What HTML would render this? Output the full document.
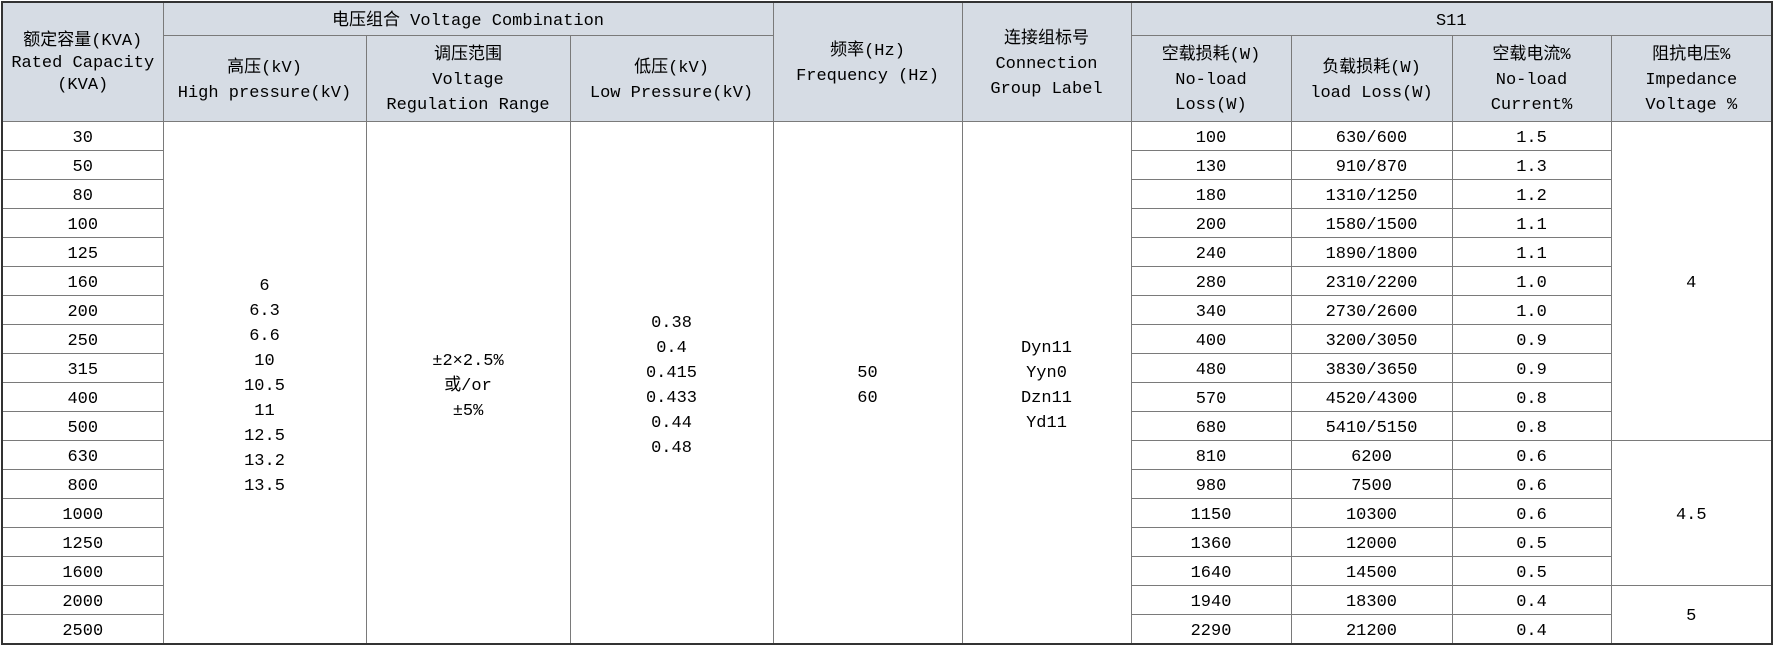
<!DOCTYPE html>
<html><head><meta charset="utf-8"><style>
html,body{margin:0;padding:0;background:#fff;width:1773px;height:647px;overflow:hidden}
table{position:absolute;left:1px;top:1px;border-collapse:collapse;table-layout:fixed;font-family:"Liberation Mono","Noto Sans CJK SC",monospace;font-size:17px;color:#000;border:2px solid #333}
td{border:1px solid #7a7a7a;text-align:center;vertical-align:middle;padding:5px 0 0 0;line-height:25px;overflow:hidden;white-space:nowrap;box-sizing:border-box}
.h td{background:#d6dce4}
tr.r td{height:29px;line-height:22px;padding-top:6px}
td.m{line-height:25px!important;padding-top:8px!important}
</style></head><body>
<table>
<colgroup><col style="width:161px"><col style="width:203px"><col style="width:204px"><col style="width:203px"><col style="width:189px"><col style="width:169px"><col style="width:160px"><col style="width:161px"><col style="width:159px"><col style="width:161px"></colgroup>
<tr class="h" style="height:33px"><td rowspan="2" style="line-height:22px">额定容量(KVA)<br>Rated Capacity<br>(KVA)</td><td colspan="3">电压组合 Voltage Combination</td><td rowspan="2">频率(Hz)<br>Frequency (Hz)</td><td rowspan="2">连接组标号<br>Connection<br>Group Label</td><td colspan="4">S11</td></tr>
<tr class="h" style="height:86px"><td>高压(kV)<br>High pressure(kV)</td><td>调压范围<br>Voltage<br>Regulation Range</td><td>低压(kV)<br>Low Pressure(kV)</td><td>空载损耗(W)<br>No-load<br>Loss(W)</td><td>负载损耗(W)<br>load Loss(W)</td><td>空载电流%<br>No-load<br>Current%</td><td>阻抗电压%<br>Impedance<br>Voltage %</td></tr>
<tr class="r"><td>30</td><td rowspan="18" class="m">6<br>6.3<br>6.6<br>10<br>10.5<br>11<br>12.5<br>13.2<br>13.5</td><td rowspan="18" class="m">±2×2.5%<br>或/or<br>±5%</td><td rowspan="18" class="m">0.38<br>0.4<br>0.415<br>0.433<br>0.44<br>0.48</td><td rowspan="18" class="m">50<br>60</td><td rowspan="18" class="m">Dyn11<br>Yyn0<br>Dzn11<br>Yd11</td><td>100</td><td>630/600</td><td>1.5</td><td rowspan="11">4</td></tr>
<tr class="r"><td>50</td><td>130</td><td>910/870</td><td>1.3</td></tr>
<tr class="r"><td>80</td><td>180</td><td>1310/1250</td><td>1.2</td></tr>
<tr class="r"><td>100</td><td>200</td><td>1580/1500</td><td>1.1</td></tr>
<tr class="r"><td>125</td><td>240</td><td>1890/1800</td><td>1.1</td></tr>
<tr class="r"><td>160</td><td>280</td><td>2310/2200</td><td>1.0</td></tr>
<tr class="r"><td>200</td><td>340</td><td>2730/2600</td><td>1.0</td></tr>
<tr class="r"><td>250</td><td>400</td><td>3200/3050</td><td>0.9</td></tr>
<tr class="r"><td>315</td><td>480</td><td>3830/3650</td><td>0.9</td></tr>
<tr class="r"><td>400</td><td>570</td><td>4520/4300</td><td>0.8</td></tr>
<tr class="r"><td>500</td><td>680</td><td>5410/5150</td><td>0.8</td></tr>
<tr class="r"><td>630</td><td>810</td><td>6200</td><td>0.6</td><td rowspan="5">4.5</td></tr>
<tr class="r"><td>800</td><td>980</td><td>7500</td><td>0.6</td></tr>
<tr class="r"><td>1000</td><td>1150</td><td>10300</td><td>0.6</td></tr>
<tr class="r"><td>1250</td><td>1360</td><td>12000</td><td>0.5</td></tr>
<tr class="r"><td>1600</td><td>1640</td><td>14500</td><td>0.5</td></tr>
<tr class="r"><td>2000</td><td>1940</td><td>18300</td><td>0.4</td><td rowspan="2">5</td></tr>
<tr class="r"><td>2500</td><td>2290</td><td>21200</td><td>0.4</td></tr>
</table>
</body></html>
